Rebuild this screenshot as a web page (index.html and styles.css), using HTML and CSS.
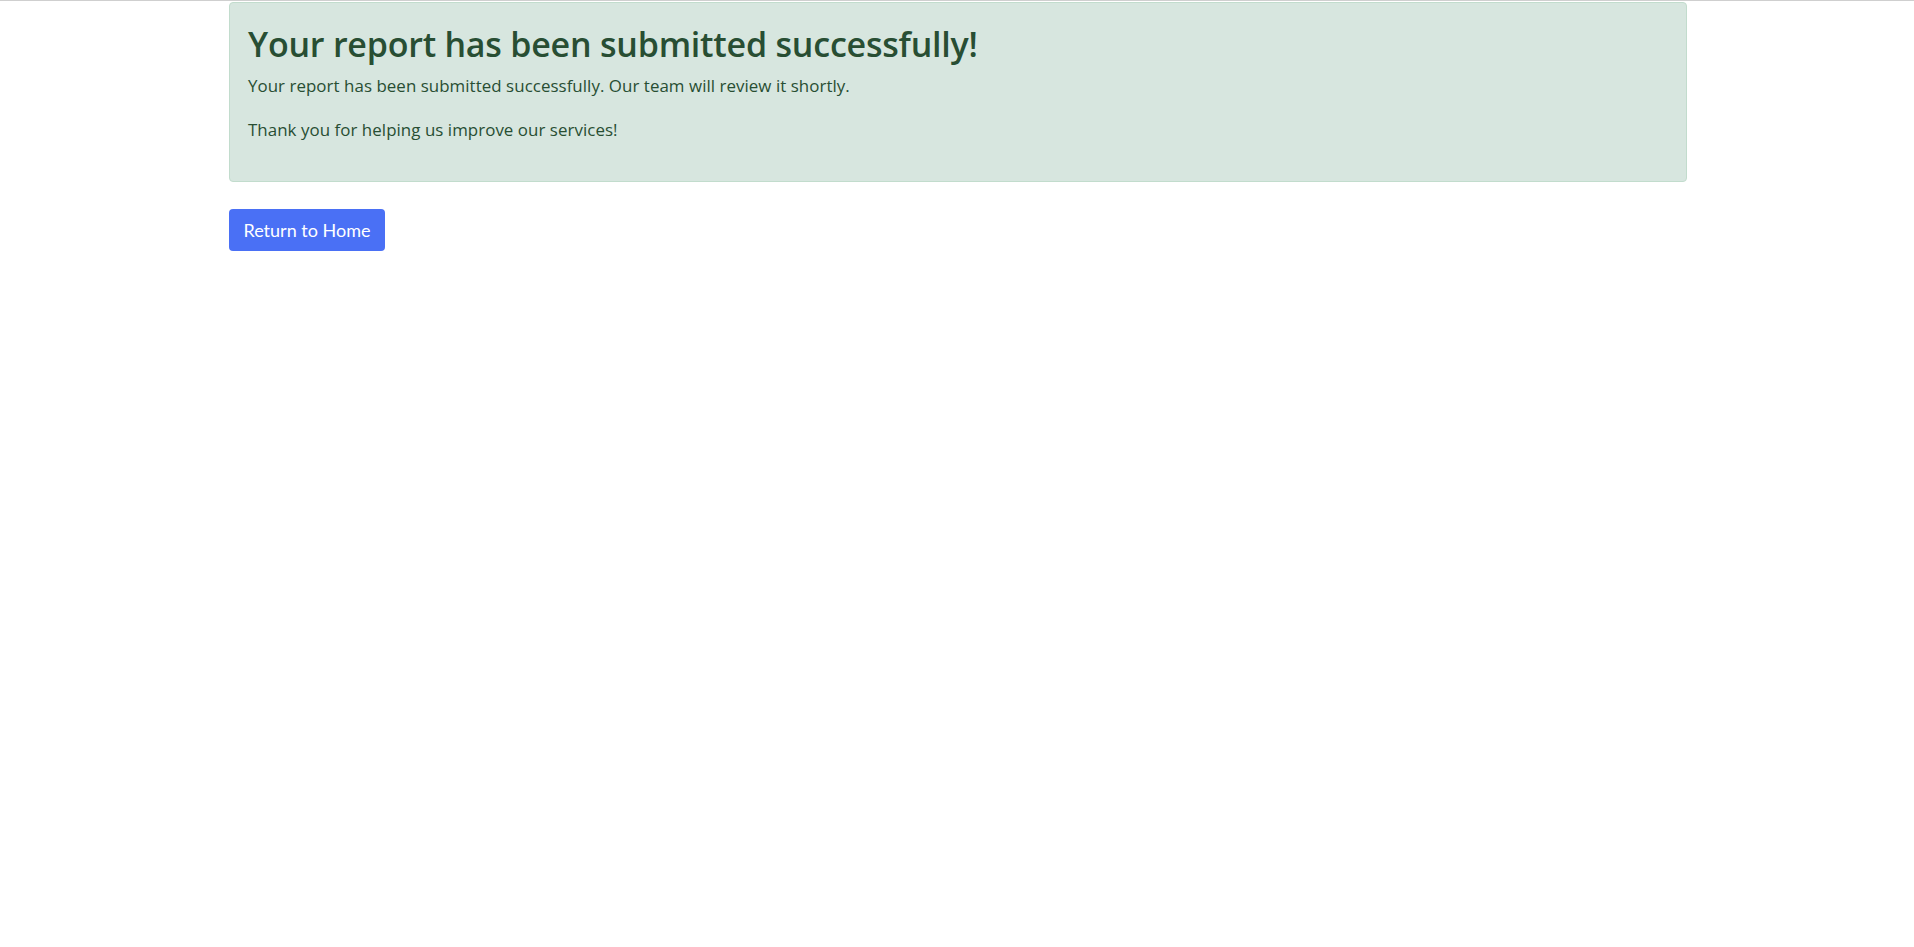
FILE: index.html
```html
<!DOCTYPE html>
<html lang="en">
<head>
<meta charset="utf-8">
<title>Report Submitted</title>
<link rel="stylesheet" href="styles.css">
</head>
<body>
<div class="topline"></div>
<main class="container">
  <div class="alert">
    <h1 class="alert-title">Your report has been submitted successfully!</h1>
    <p>Your report has been submitted successfully. Our team will review it shortly.</p>
    <p>Thank you for helping us improve our services!</p>
  </div>
  <a class="btn" href="#">Return to Home</a>
</main>
</body>
</html>
```

FILE: styles.css
```css
* { box-sizing: border-box; }
html, body { margin: 0; padding: 0; background: #fff; }
body {
  font-family: "Open Sans", "Noto Sans", sans-serif;
  color: #212529;
  padding-left: 2px;
}
.topline { height: 1px; background: #cfcfcf; margin-left: -2px; }
.container {
  width: 1458px;
  margin: 1px auto 0;
}
.alert {
  background: #d7e6df;
  border: 1px solid #c2dccd;
  border-radius: 4px;
  color: #284e33;
  padding: 21px 18px 14px;
  height: 180px;
}
.alert-title {
  font-size: 34px;
  font-weight: 600;
  line-height: 40.8px;
  margin: 0 0 8px;
  letter-spacing: -0.22px;
}
.alert p {
  font-size: 16.9px;
  line-height: 26px;
  margin: 0 0 18px;
  letter-spacing: 0.05px;
}
.btn {
  display: inline-flex;
  align-items: center;
  justify-content: center;
  margin-top: 27px;
  width: 156px;
  height: 42px;
  background: #4a70f5;
  color: #fff;
  border-radius: 4px;
  font-family: "Lato", sans-serif;
  font-size: 18px;
  text-decoration: none;
}
```
